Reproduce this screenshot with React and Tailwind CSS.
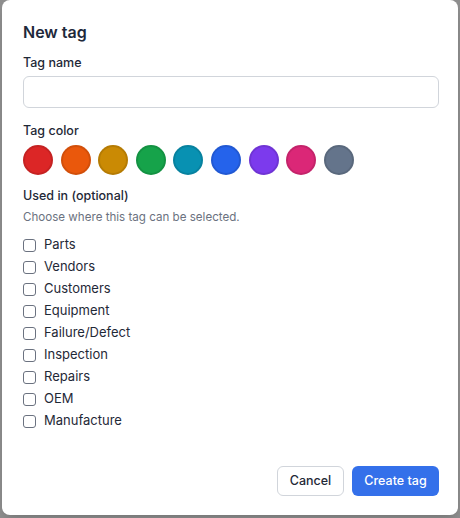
import React, { useState } from 'react';

const colors = ['#dc2626', '#ea580c', '#ca8a04', '#16a34a', '#0891b2', '#2563eb', '#7c3aed', '#db2777', '#64748b'];
const modules = ['Parts', 'Vendors', 'Customers', 'Equipment', 'Failure/Defect', 'Inspection', 'Repairs', 'OEM', 'Manufacture'];

const App = () => {
    const [name, setName] = useState('');
    const [color, setColor] = useState(null);
    const [used, setUsed] = useState({});

    return (
        <div className="h-[518px] w-[460px] bg-[#8e8e8e] overflow-hidden" style={{ fontFamily: 'Inter, "Noto Sans", sans-serif' }}>
            <div className="ml-[2px] w-[456px] h-[515px] bg-white rounded-[8px] shadow-lg flex flex-col pl-[21px] pr-[19px] pt-[20px] pb-[19px]">
                <h2 className="text-[16px] leading-[24px] font-semibold text-[#1e293b]">New tag</h2>

                <label className="mt-[9px] text-[12.5px] leading-[20px] font-medium text-[#1f2937]">Tag name</label>
                <input
                    value={name}
                    onChange={(e) => setName(e.target.value)}
                    className="mt-[3px] h-[32px] w-full rounded-[6px] border border-[#d1d5db] px-3 text-[13px] outline-none"
                />

                <p className="mt-[13px] text-[12.5px] leading-[20px] font-medium text-[#1f2937]">Tag color</p>
                <div className="mt-[4px] flex gap-[7.6px]">
                    {colors.map((c) => (
                        <button
                            key={c}
                            onClick={() => setColor(c)}
                            className="w-[30px] h-[30px] rounded-full border-2 border-black/10"
                            style={{ backgroundColor: c }}
                        />
                    ))}
                </div>

                <p className="mt-[11px] text-[12.5px] leading-[20px] font-medium text-[#1f2937]">Used in (optional)</p>
                <p className="mt-[2px] text-[11.6px] leading-[18px] text-[#6b7280]">Choose where this tag can be selected.</p>

                <div className="mt-[8px] flex flex-col">
                    {modules.map((m) => (
                        <label key={m} className="h-[22px] flex items-center gap-[8px] text-[13px] text-[#1f2937]">
                            <input
                                type="checkbox"
                                checked={!!used[m]}
                                onChange={() => setUsed({ ...used, [m]: !used[m] })}
                                className="appearance-none w-[13px] h-[13px] rounded-[3px] border border-[#6b7280] bg-white checked:bg-[#2563eb]"
                            />
                            {m}
                        </label>
                    ))}
                </div>

                <div className="mt-auto flex justify-end gap-[8px]">
                    <button className="h-[30px] w-[67px] rounded-[6px] border border-[#d1d5db] bg-white text-[12.5px] font-medium text-[#1f2937]">Cancel</button>
                    <button className="h-[30px] w-[87px] rounded-[6px] bg-[#3470ea] text-[12.5px] font-medium text-white">Create tag</button>
                </div>
            </div>
        </div>
    );
};

export default App;
